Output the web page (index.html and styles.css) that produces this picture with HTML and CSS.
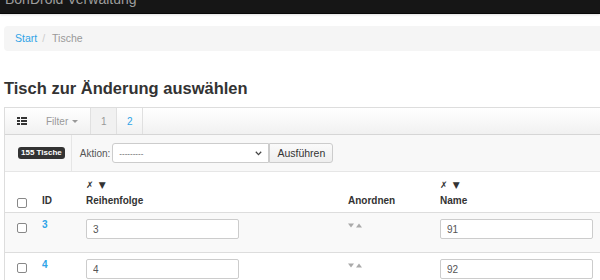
FILE: index.html
```html
<!DOCTYPE html>
<html lang="de">
<head>
    <meta charset="UTF-8">
    <meta name="viewport" content="width=device-width, initial-scale=1.0">
    <title>Tische | BonDroid Verwaltung</title>
    <link rel="stylesheet" href="styles.css">
</head>
<body>
    <div class="navbar">
        <span class="brand">BonDroid Verwaltung</span>
    </div>
    <div class="page">
        <ol class="breadcrumb">
            <li><a href="#">Start</a></li>
            <li class="active">Tische</li>
        </ol>
        <h1>Tisch zur Änderung auswählen</h1>
        <div class="changelist">
            <div class="toolbar">
                <span class="tool tool-icon">
                    <svg width="10" height="8" viewBox="0 0 10 8">
                        <rect x="0" y="0" width="3" height="2" fill="#333"/>
                        <rect x="4" y="0" width="6" height="2" fill="#333"/>
                        <rect x="0" y="3" width="3" height="2" fill="#333"/>
                        <rect x="4" y="3" width="6" height="2" fill="#333"/>
                        <rect x="0" y="6" width="3" height="2" fill="#333"/>
                        <rect x="4" y="6" width="6" height="2" fill="#333"/>
                    </svg>
                </span>
                <span class="tool tool-filter">Filter <span class="caret"></span></span>
                <span class="page-btn current">1</span>
                <a class="page-btn" href="#">2</a>
            </div>
            <div class="actions">
                <div class="count"><span class="badge">155 Tische</span></div>
                <label class="action-label">Aktion:</label>
                <div class="select">
                    <span>---------</span>
                    <svg width="7" height="5" viewBox="0 0 7 5">
                        <path d="M0.8 0.8 L3.5 3.6 L6.2 0.8" fill="none" stroke="#444" stroke-width="1.3"/>
                    </svg>
                </div>
                <button class="btn">Ausführen</button>
            </div>
            <table class="result-list">
                <colgroup>
                    <col class="col-check">
                    <col class="col-id">
                    <col class="col-order">
                    <col class="col-sort">
                    <col class="col-name">
                    <col>
                </colgroup>
                <thead>
                    <tr>
                        <th class="check"><input type="checkbox" class="cb"></th>
                        <th>ID</th>
                        <th><span class="sort-tools">✗ ▼</span><br>Reihenfolge</th>
                        <th>Anordnen</th>
                        <th><span class="sort-tools">✗ ▼</span><br>Name</th>
                        <th></th>
                    </tr>
                </thead>
                <tbody>
                    <tr class="row1">
                        <td class="check"><input type="checkbox" class="cb"></td>
                        <td class="id"><a href="#">3</a></td>
                        <td><input type="text" class="field" value="3"></td>
                        <td class="arrows">
                            <svg width="14" height="5" viewBox="0 0 14 5">
                                <path d="M0 0.5 L6 0.5 L3 4.5 Z" fill="#aaa"/>
                                <path d="M8 4.5 L14 4.5 L11 0.5 Z" fill="#aaa"/>
                            </svg>
                        </td>
                        <td><input type="text" class="field" value="91"></td>
                        <td></td>
                    </tr>
                    <tr class="row2">
                        <td class="check"><input type="checkbox" class="cb"></td>
                        <td class="id"><a href="#">4</a></td>
                        <td><input type="text" class="field" value="4"></td>
                        <td class="arrows">
                            <svg width="14" height="5" viewBox="0 0 14 5">
                                <path d="M0 0.5 L6 0.5 L3 4.5 Z" fill="#aaa"/>
                                <path d="M8 4.5 L14 4.5 L11 0.5 Z" fill="#aaa"/>
                            </svg>
                        </td>
                        <td><input type="text" class="field" value="92"></td>
                        <td></td>
                    </tr>
                </tbody>
            </table>
        </div>
    </div>
</body>
</html>
```

FILE: styles.css
```css
body {
    font-family: "Liberation Sans", Arial, sans-serif;
    font-size: 10px;
    color: #333;
    margin: 0;
    overflow: hidden;
    background: #fff;
}
a {
    color: #2fa4e7;
    text-decoration: none;
}
.navbar {
    height: 24px;
    padding: 16px 0 0 5px;
    margin-top: -27px;
    background-color: #161616;
    border-bottom: 1px solid #080808;
    box-shadow: 0 1px 2px rgba(0, 0, 0, 0.12);
}
.brand {
    font-size: 14px;
    line-height: 20px;
    color: #9d9d9d;
}
.page {
    margin-left: 4px;
}
.breadcrumb {
    list-style: none;
    margin: 12px 0 0 0;
    padding: 0 11px;
    height: 25px;
    line-height: 25px;
    font-size: 10.5px;
    background-color: #f5f5f5;
    border-radius: 4px 0 0 4px;
    display: flex;
}
.breadcrumb li + li:before {
    content: "/\00a0";
    padding: 0 4px 0 5px;
    color: #ccc;
}
.breadcrumb .active {
    color: #999;
}
h1 {
    font-size: 16.5px;
    line-height: 20px;
    font-weight: bold;
    margin: 27px 0 9px 0;
    color: #333;
}
.changelist {
    border: 1px solid #ddd;
    border-right: none;
}
.toolbar {
    display: flex;
    height: 26px;
    background: linear-gradient(#fff, #f1f1f1);
    border-bottom: 1px solid #d6d6d6;
}
.tool {
    display: flex;
    align-items: center;
}
.tool-icon {
    padding: 0 12px;
}
.tool-filter {
    padding: 0 12px 0 7px;
    color: #999;
    font-size: 10px;
}
.caret {
    display: inline-block;
    width: 0;
    height: 0;
    margin-left: 4px;
    border-top: 3px solid #999;
    border-left: 3px solid transparent;
    border-right: 3px solid transparent;
}
.page-btn {
    width: 25px;
    display: flex;
    align-items: center;
    justify-content: center;
    border-left: 1px solid #e0e0e0;
    color: #999;
}
.page-btn.current {
    background: #f1f1f1;
}
a.page-btn {
    color: #2fa4e7;
    border-right: 1px solid #e0e0e0;
}
.actions {
    display: flex;
    align-items: center;
    height: 36px;
    background: #f8f8f8;
    border-bottom: 1px solid #e6e6e6;
}
.count {
    align-self: stretch;
    display: flex;
    align-items: center;
    padding: 0 6px 0 13px;
    border-right: 1px solid #e6e6e6;
}
.badge {
    background: #333;
    color: #fff;
    font-size: 8px;
    font-weight: bold;
    line-height: 10px;
    padding: 1px 3px;
    border-radius: 3px;
}
.action-label {
    margin: 0 2px 0 8px;
    color: #555;
}
.select {
    width: 149px;
    height: 18px;
    border: 1px solid #ccc;
    border-radius: 3px 0 0 3px;
    background: #fff;
    display: flex;
    align-items: center;
    justify-content: space-between;
    padding: 0 0 0 6px;
    font-size: 8px;
    color: #555;
}
.select svg {
    margin-right: 6px;
}
.btn {
    font-family: "Liberation Sans", Arial, sans-serif;
    font-size: 10.5px;
    color: #333;
    height: 20px;
    width: 64px;
    margin-left: 0;
    padding: 0;
    border: 1px solid #ccc;
    border-radius: 0 3px 3px 0;
    background: linear-gradient(#fafafa, #eee);
}
.result-list {
    width: 100%;
    border-collapse: collapse;
    table-layout: fixed;
}
.col-check {
    width: 31px;
}
.col-id {
    width: 44px;
}
.col-order {
    width: 262px;
}
.col-sort {
    width: 92px;
}
.col-name {
    width: 164px;
}
.result-list th {
    text-align: left;
    vertical-align: bottom;
    font-weight: bold;
    line-height: 15px;
    padding: 5px 6px 4px 6px;
    border-bottom: 1px solid #ddd;
}
.sort-tools {
    font-family: "DejaVu Sans", sans-serif;
    font-size: 9px;
    letter-spacing: 1px;
}
.result-list td {
    vertical-align: top;
    padding: 6px 6px 13px 6px;
    border-bottom: 1px solid #ddd;
    line-height: 12px;
}
.result-list .check {
    padding-left: 12px;
}
.row1 td {
    background: #f9f9f9;
}
.cb {
    -webkit-appearance: none;
    appearance: none;
    display: block;
    width: 10px;
    height: 10px;
    margin: 0;
    border: 1px solid #888;
    border-radius: 2px;
    background: #fff;
}
td .cb {
    margin-top: 4px;
}
.id a {
    font-weight: bold;
    font-size: 10px;
}
.arrows svg {
    display: block;
    margin-top: 4px;
}
.field {
    display: block;
    box-sizing: border-box;
    width: 153px;
    height: 20px;
    margin: 0;
    padding: 0 6px;
    border: 1px solid #ccc;
    border-radius: 2px;
    background: #fff;
    font-family: "Liberation Sans", Arial, sans-serif;
    font-size: 10px;
    color: #555;
}
```
